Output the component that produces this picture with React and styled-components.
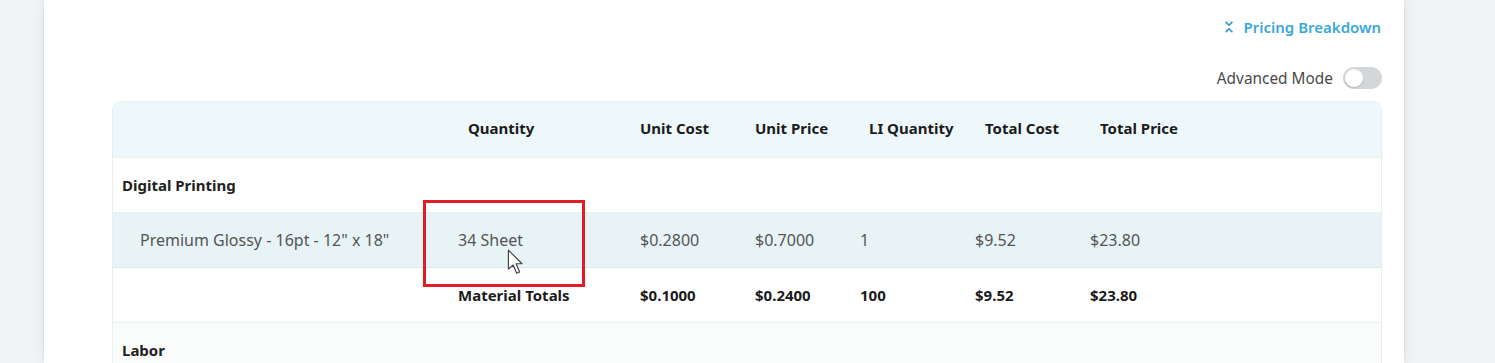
import styled, { createGlobalStyle } from 'styled-components';
import { ChevronsDownUp } from 'lucide-react';

const GlobalStyle = createGlobalStyle`
  html, body {
    margin: 0;
    padding: 0;
    height: 100%;
    overflow: hidden;
  }
  body {
    font-family: "Noto Sans", "Open Sans", sans-serif;
    background: #eef3f5;
  }
`;

const columns = [
  { key: 'qty', label: 'Quantity', shift: 10 },
  { key: 'unitCost', label: 'Unit Cost', shift: 0 },
  { key: 'unitPrice', label: 'Unit Price', shift: 0 },
  { key: 'liQty', label: 'LI Quantity', shift: 9 },
  { key: 'totalCost', label: 'Total Cost', shift: 10 },
  { key: 'totalPrice', label: 'Total Price', shift: 10 },
];

const item = {
  name: 'Premium Glossy - 16pt - 12" x 18"',
  qty: '34 Sheet',
  unitCost: '$0.2800',
  unitPrice: '$0.7000',
  liQty: '1',
  totalCost: '$9.52',
  totalPrice: '$23.80',
};

const totals = {
  qty: 'Material Totals',
  unitCost: '$0.1000',
  unitPrice: '$0.2400',
  liQty: '100',
  totalCost: '$9.52',
  totalPrice: '$23.80',
};

const App = () => (
  <>
    <GlobalStyle />
    <Page>
      <Card>
        <Toolbar>
          <BreakdownLink>
            <ChevronsDownUp size={14} strokeWidth={3} />
            Pricing Breakdown
          </BreakdownLink>
          <ModeRow>
            Advanced Mode
            <Toggle>
              <Knob />
            </Toggle>
          </ModeRow>
        </Toolbar>
        <Table>
          <Row $variant="head">
            <Cell />
            {columns.map((c) => (
              <HeadCell key={c.key} $shift={c.shift}>{c.label}</HeadCell>
            ))}
          </Row>
          <Row>
            <SectionCell>Digital Printing</SectionCell>
          </Row>
          <Row $variant="hover">
            <Cell $indent>{item.name}</Cell>
            {columns.map((c) => (
              <Cell key={c.key}>{item[c.key]}</Cell>
            ))}
            <Annotation />
            <Pointer viewBox="0 0 14 22" width="17" height="26">
              <path d="M1 1 L1 17 L5 13.5 L8 20.5 L10.5 19.5 L7.5 12.5 L12.5 12.5 Z" fill="#fff" stroke="#444" strokeWidth="1" strokeLinejoin="round" />
            </Pointer>
          </Row>
          <Row>
            <Cell />
            {columns.map((c) => (
              <Cell key={c.key} $bold>{totals[c.key]}</Cell>
            ))}
          </Row>
          <Row $variant="muted">
            <SectionCell>Labor</SectionCell>
          </Row>
        </Table>
      </Card>
    </Page>
  </>
);

export default App;

const Page = styled.div`
  height: 363px;
  display: flex;
  padding: 0 91px 0 44px;
  background: linear-gradient(90deg, #f1f5f7 0%, #eef3f5 50%, #f0f4f6 100%);
`;

const Card = styled.div`
  flex: 1;
  background: #fff;
  box-shadow: 0 0 14px rgba(40, 50, 60, 0.1), 0 0 0 1px #eaedef;
  padding: 0 22px 0 68px;
  display: flex;
  flex-direction: column;
`;

const Toolbar = styled.div`
  display: flex;
  flex-direction: column;
  align-items: flex-end;
  padding-top: 17px;
  gap: 30px;
  height: 89px;
  box-sizing: border-box;
`;

const BreakdownLink = styled.div`
  display: flex;
  align-items: center;
  gap: 8px;
  color: #3aa8d8;
  font-size: 15px;
  font-weight: 600;
  height: 22px;
  padding-right: 1px;
  svg {
    color: #2f9fd0;
  }
`;

const ModeRow = styled.div`
  display: flex;
  align-items: center;
  gap: 10px;
  font-size: 15.4px;
  color: #4a4a4a;
`;

const Toggle = styled.div`
  width: 39px;
  height: 22px;
  border-radius: 11px;
  background: #d3d7da;
  display: flex;
  align-items: center;
  padding: 0 2px;
  box-sizing: border-box;
`;

const Knob = styled.div`
  width: 18px;
  height: 18px;
  border-radius: 50%;
  background: #fff;
  box-shadow: 0 1px 2px rgba(0, 0, 0, 0.15);
`;

const Table = styled.div`
  border: 1px solid #e6eef1;
  border-bottom: none;
  border-radius: 9px 9px 0 0;
  overflow: hidden;
  margin-top: 12px;
  flex: 1;
`;

const rowBg = {
  head: '#eef8fb',
  hover: '#e8f3f6',
  muted: '#fafbfb',
};

const Row = styled.div`
  display: grid;
  grid-template-columns: 335px 182px 115px 105px 115px 115px 1fr;
  align-items: center;
  height: ${({ $variant }) => ($variant === 'head' ? 56 : 55)}px;
  padding-bottom: ${({ $variant }) => ($variant === 'head' ? 3 : 1)}px;
  box-sizing: border-box;
  background: ${({ $variant }) => rowBg[$variant] || '#fff'};
  border-bottom: 1px solid ${({ $variant }) => ($variant === 'hover' ? '#dde8ec' : '#eaf0f2')};
  position: relative;
  font-size: 16px;
`;

const Cell = styled.div`
  padding-left: ${({ $indent }) => ($indent ? 27 : 10)}px;
  color: ${({ $bold }) => ($bold ? '#1c1c1c' : '#555')};
  font-weight: ${({ $bold }) => ($bold ? 700 : 400)};
  font-size: ${({ $bold }) => ($bold ? 15 : 16)}px;
  white-space: nowrap;
`;

const HeadCell = styled.div`
  padding-left: ${({ $shift }) => 10 + $shift}px;
  font-weight: 700;
  font-size: 15px;
  color: #1c1c1c;
  white-space: nowrap;
`;

const SectionCell = styled.div`
  grid-column: 1 / -1;
  padding-left: 9px;
  font-weight: 700;
  font-size: 15px;
  color: #222;
`;

const Annotation = styled.div`
  position: absolute;
  z-index: 2;
  left: 310px;
  top: -13px;
  width: 156px;
  height: 81px;
  border: 3px solid #e31b23;
  pointer-events: none;
`;

const Pointer = styled.svg`
  position: absolute;
  z-index: 3;
  left: 394px;
  top: 36px;
`;
